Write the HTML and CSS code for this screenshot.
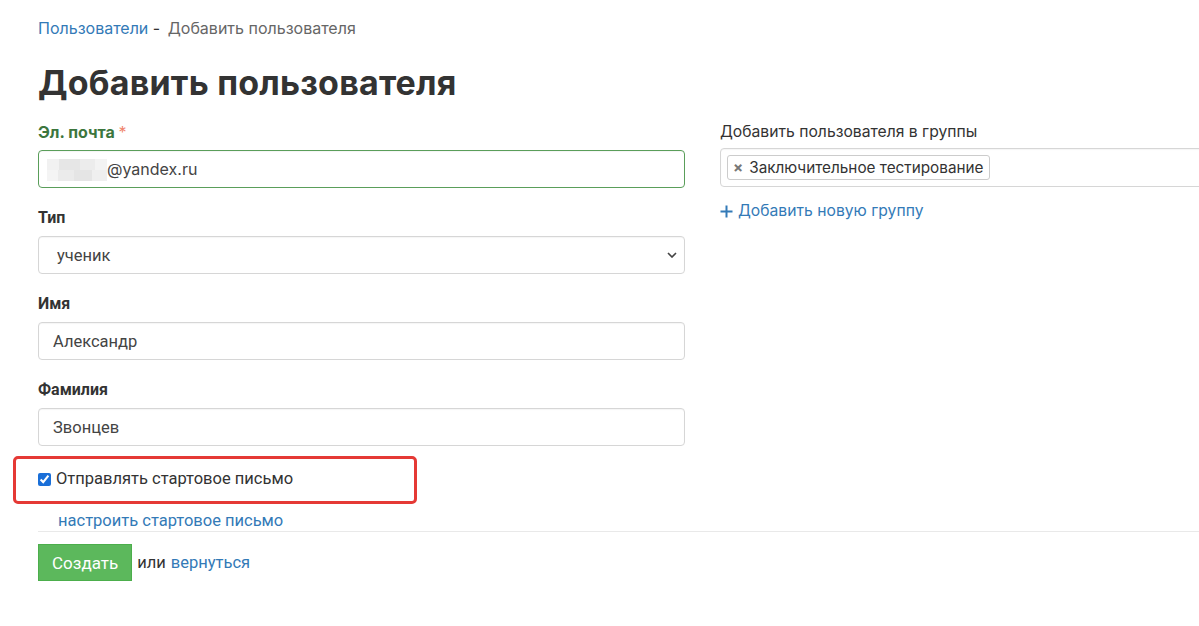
FILE: index.html
```html
<!DOCTYPE html>
<html lang="ru">
<head>
  <meta charset="UTF-8">
  <title>Добавить пользователя</title>
  <link rel="stylesheet" href="styles.css">
</head>
<body>
  <div class="page">
    <div class="breadcrumb">
      <a href="#">Пользователи</a><span class="sep"> - </span><span class="current">Добавить пользователя</span>
    </div>
    <h1>Добавить пользователя</h1>

    <form class="user-form">
      <div class="columns">
        <div class="col-left">
          <div class="field has-success">
            <label class="field-label">Эл. почта <span class="req">*</span></label>
            <div class="input email-input">
              <span class="blurred"></span>@yandex.ru
            </div>
          </div>
          <div class="field">
            <label class="field-label plain">Тип</label>
            <div class="select-wrap">
              <select class="input select">
                <option>ученик</option>
              </select>
              <svg class="chevron" width="10" height="6" viewBox="0 0 10 6"><path d="M1 1l4 4 4-4" fill="none" stroke="#444" stroke-width="1.6"/></svg>
            </div>
          </div>
          <div class="field">
            <label class="field-label plain">Имя</label>
            <input class="input plain" type="text" value="Александр">
          </div>
          <div class="field">
            <label class="field-label plain">Фамилия</label>
            <input class="input plain" type="text" value="Звонцев">
          </div>

          <div class="highlight">
            <label class="check">
              <input type="checkbox" checked>
              <span>Отправлять стартовое письмо</span>
            </label>
          </div>
          <a href="#" class="setup-link">настроить стартовое письмо</a>
        </div>

        <div class="col-right">
          <div class="field">
            <label class="field-label light">Добавить пользователя в группы</label>
            <div class="input tags">
              <span class="tag"><span class="tag-x">×</span>Заключительное тестирование</span>
            </div>
          </div>
          <a href="#" class="add-group">
            <svg class="plus" width="13" height="13" viewBox="0 0 13 13"><path d="M6.5 0.5v12M0.5 6.5h12" stroke="#337ab7" stroke-width="2"/></svg>Добавить новую группу
          </a>
        </div>
      </div>

      <div class="actions">
        <button type="button" class="btn-create">Создать</button>
        <span class="or">или</span>
        <a href="#">вернуться</a>
      </div>
    </form>
  </div>
</body>
</html>
```

FILE: styles.css
```css
html, body {
  margin: 0;
  padding: 0;
  background: #fff;
  color: #333;
  font-family: Inter, "Noto Sans", sans-serif;
  overflow: hidden;
}
a {
  color: #337ab7;
  text-decoration: none;
}
.page {
  padding: 18px 0 0 38px;
  width: 1400px;
}
.breadcrumb {
  font-size: 16px;
  line-height: 20px;
}
.breadcrumb .sep { color: #333; }
.breadcrumb .current { color: #666; margin-left: 3px; }

h1 {
  margin: 25px 0 19px;
  font-size: 34px;
  line-height: 40px;
  font-weight: 700;
  color: #333;
  letter-spacing: 0.2px;
}

.columns {
  display: flex;
  gap: 35px;
}
.col-left, .col-right {
  width: 647px;
}
.field {
  margin-bottom: 20px;
}
.field-label {
  display: block;
  font-size: 16px;
  line-height: 20px;
  font-weight: 700;
  margin-bottom: 8px;
}
.field-label.plain {
  font-family: Roboto, "Liberation Sans", sans-serif;
  font-size: 16px;
}
.field-label.light {
  font-weight: 400;
  font-size: 15.7px;
  margin-bottom: 7px;
}
.has-success .field-label { color: #3c763d; }
.req { color: #f0846c; font-weight: 400; }

.input {
  box-sizing: border-box;
  display: block;
  width: 100%;
  height: 38px;
  border: 1px solid #d6d6d6;
  border-radius: 4px;
  padding: 0 14px;
  font-size: 16.5px;
  color: #444;
  background: #fff;
  box-shadow: inset 0 1px 1px rgba(0,0,0,0.04);
}
.input.plain, .select {
  font-family: Roboto, "Liberation Sans", sans-serif;
}
.email-input {
  display: flex;
  align-items: center;
  padding-left: 8px;
  border-color: #5a9e5a;
  color: #444;
  font-size: 16px;
}
.blurred {
  display: inline-block;
  width: 60px;
  height: 22px;
  margin-top: 2px;
  background:
    linear-gradient(90deg, #f1f1f1 0 20%, #e6e6e6 20% 55%, #ececec 55% 80%, #f3f3f3 80%) top / 100% 50% no-repeat,
    linear-gradient(90deg, #f4f4f4 0 18%, #ebebeb 18% 45%, #e5e5e5 45% 75%, #efefef 75%) bottom / 100% 50% no-repeat;
}
.select-wrap {
  position: relative;
}
.select {
  appearance: none;
  -webkit-appearance: none;
  padding-left: 18px;
}
.chevron {
  position: absolute;
  right: 8px;
  top: 16px;
}

.highlight {
  box-sizing: border-box;
  margin: -10px 0 0 -25px;
  width: 404px;
  border: 3px solid #e53935;
  border-radius: 5px;
  padding: 10px 0 12px 22px;
}
.check {
  display: flex;
  align-items: center;
  gap: 5px;
  font-family: Roboto, "Liberation Sans", sans-serif;
  font-size: 16.5px;
  line-height: 20px;
  color: #333;
}
.check input {
  margin: 0;
  width: 13px;
  height: 13px;
  accent-color: #1a6fd8;
}
.setup-link {
  display: block;
  margin: 7px 0 0 20px;
  font-family: Roboto, "Liberation Sans", sans-serif;
  font-size: 16.5px;
  line-height: 20px;
}

.tags {
  display: flex;
  align-items: center;
  padding: 0 6px;
  height: 39px;
  margin-top: -1px;
}
.tag {
  display: inline-flex;
  align-items: center;
  height: 25px;
  box-sizing: border-box;
  border: 1px solid #ccc;
  border-radius: 3px;
  padding: 0 5px 0 5px;
  font-family: Inter, "Noto Sans", sans-serif;
  font-size: 15.3px;
  color: #333;
}
.tag-x {
  color: #777;
  font-weight: 700;
  font-size: 15px;
  margin-right: 6px;
}
.add-group {
  display: flex;
  width: fit-content;
  align-items: center;
  margin-top: -6px;
  font-size: 15.7px;
  line-height: 20px;
}
.plus {
  margin-right: 5px;
}

.actions {
  margin-top: 0;
  border-top: 1px solid #e9e9e9;
  padding-top: 12px;
  display: flex;
  align-items: center;
  gap: 5px;
  font-family: Roboto, "Liberation Sans", sans-serif;
  font-size: 16.5px;
}
.btn-create {
  height: 37px;
  padding: 0 13px;
  background: #5cb85c;
  border: 1px solid #4cae4c;
  border-radius: 0;
  color: #fff;
  font-family: Roboto, "Liberation Sans", sans-serif;
  font-size: 17px;
}
.or { color: #333; }
```
